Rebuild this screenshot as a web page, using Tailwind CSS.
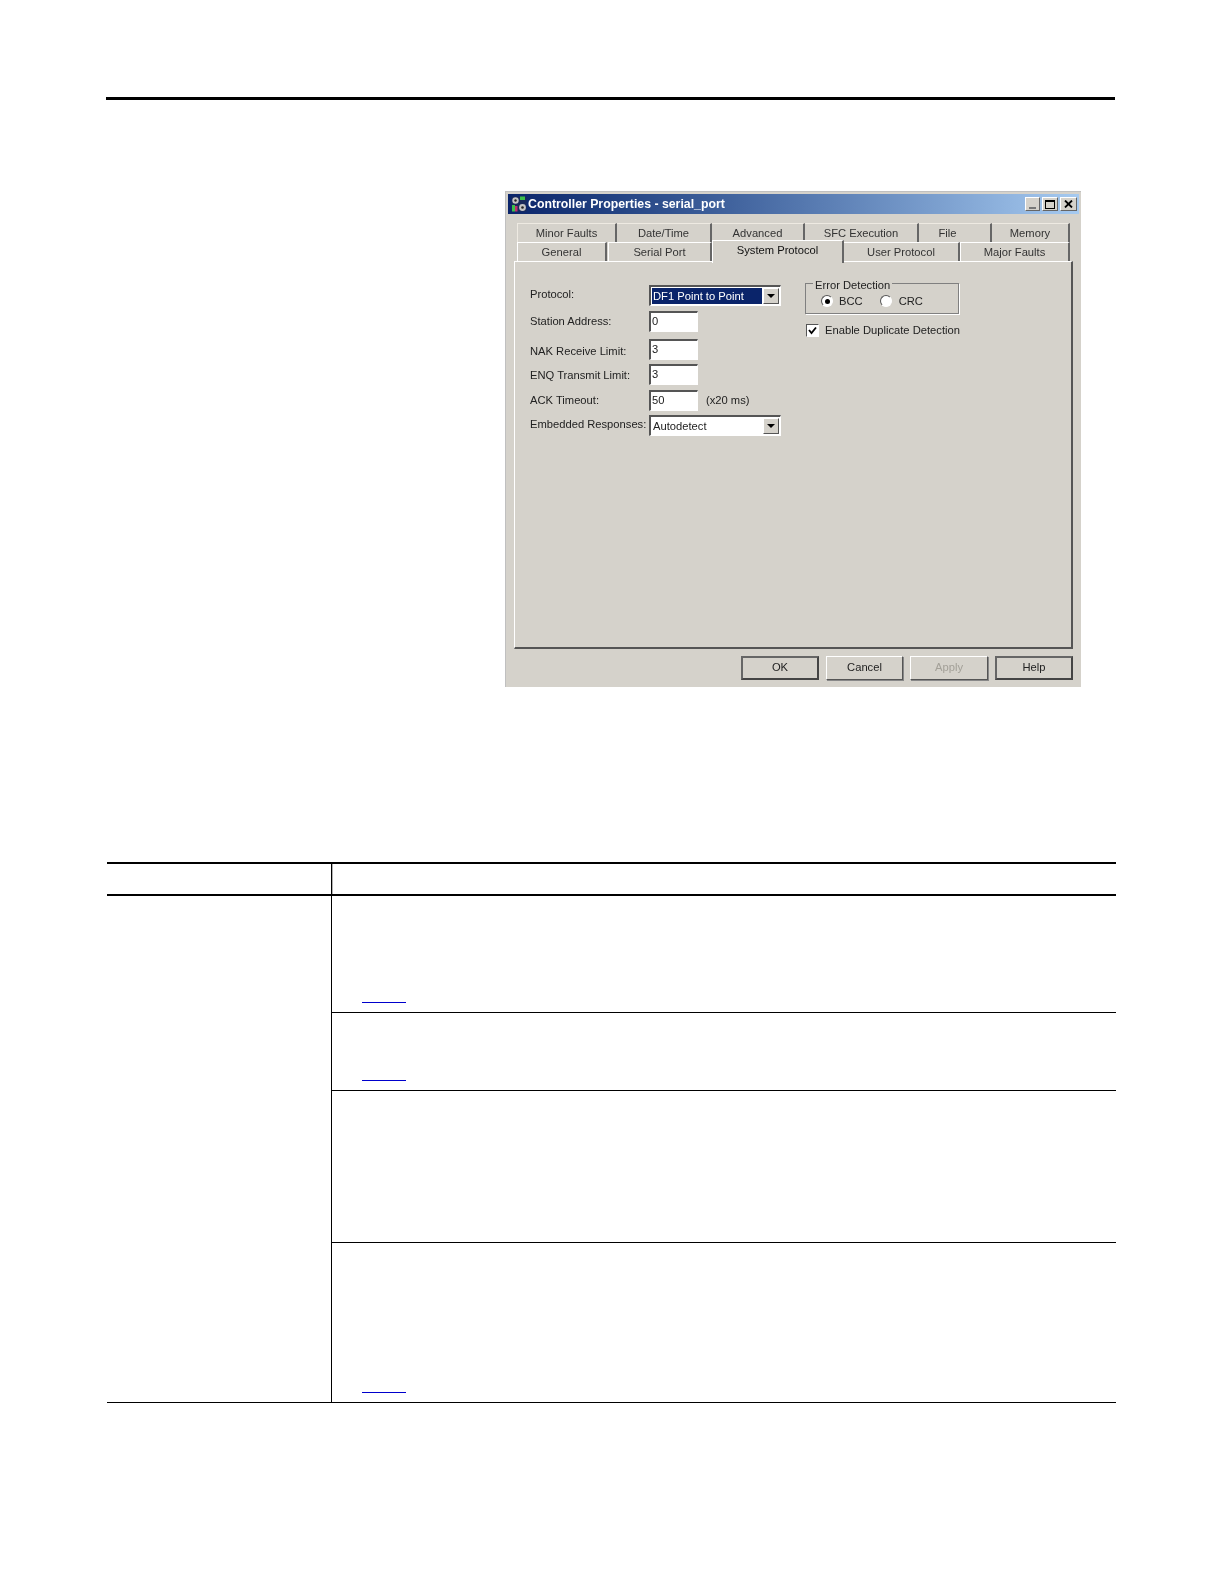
<!DOCTYPE html>
<html>
<head>
<meta charset="utf-8">
<script src="https://cdn.jsdelivr.net/npm/@tailwindcss/browser@4"></script>
</head>
<body class="bg-white">
<div class="w-[1224px] h-[1584px] pt-[97px] pl-[106px] font-['Liberation_Sans',sans-serif]">
  <div class="w-[1009px] h-[3px] bg-black"></div>

  <!-- Dialog -->
  <div class="ml-[399px] mt-[91px] w-[576px] h-[496px] bg-[#d5d2cb] flex flex-col pt-[2px] pl-[1px] pr-[1px] text-[11.2px] leading-[14px] text-[#222] blur-[0.35px] border-t border-l border-[#c0c0c0]">
    <div class="h-[20px] mx-[1px] shrink-0 flex items-center bg-gradient-to-r from-[#0a246a] to-[#a6caf0] pl-[3px] pr-[2px]">
      <svg class="w-[16px] h-[16px] shrink-0" viewBox="0 0 16 16">
        <rect x="0.5" y="0.5" width="15" height="15" fill="#1a2a5a"/>
        <circle cx="4.5" cy="4.5" r="3.2" fill="#c4c4c4"/>
        <circle cx="4.5" cy="4.5" r="1.2" fill="#222"/>
        <rect x="9" y="0.5" width="5" height="3.5" fill="#3cc04a"/>
        <circle cx="11.5" cy="11.5" r="3.4" fill="#c4c4c4"/>
        <circle cx="11.5" cy="11.5" r="1.3" fill="#222"/>
        <rect x="1" y="9" width="3" height="6.5" fill="#3cc04a"/>
        <rect x="4" y="10" width="2.5" height="5.5" fill="#c03070"/>
      </svg>
      <span class="ml-[1px] text-white font-bold text-[12.3px] whitespace-nowrap">Controller Properties - serial_port</span>
      <div class="ml-auto flex gap-[2px] items-center">
        <div class="w-[15px] h-[14px] bg-[#d5d2cb] border border-t-white border-l-white border-r-[#666] border-b-[#666] flex items-end justify-center pb-[1px]"><div class="w-[7px] h-[2px] bg-[#777]"></div></div>
        <div class="w-[16px] h-[14px] bg-[#d5d2cb] border border-t-white border-l-white border-r-[#666] border-b-[#666] flex items-center justify-center"><div class="w-[10px] h-[9px] border border-black border-t-2"></div></div>
        <div class="w-[17px] h-[14px] bg-[#d5d2cb] border border-t-white border-l-white border-r-[#666] border-b-[#666] flex items-center justify-center">
          <svg class="w-[9px] h-[8px]" viewBox="0 0 9 8"><path d="M1 0.5 L8 7.5 M8 0.5 L1 7.5" stroke="#000" stroke-width="1.8"/></svg>
        </div>
      </div>
    </div>

    <!-- Tabs row 1 -->
    <div class="mt-[9px] ml-[10px] h-[19px] shrink-0 flex text-[#333]">
      <div class="w-[100px] border-t border-l border-[#eeeae2] border-r-2 border-r-[#666] flex items-center justify-center pb-[1px]">Minor Faults</div>
      <div class="w-[95px] border-t border-[#eeeae2] border-r-2 border-r-[#666] flex items-center justify-center pb-[1px]">Date/Time</div>
      <div class="w-[93px] border-t border-[#eeeae2] border-r-2 border-r-[#666] flex items-center justify-center pb-[1px]">Advanced</div>
      <div class="w-[114px] border-t border-[#eeeae2] border-r-2 border-r-[#666] flex items-center justify-center pb-[1px]">SFC Execution</div>
      <div class="w-[73px] border-t border-[#eeeae2] border-r-2 border-r-[#666] flex items-center justify-center pb-[1px] pr-[14px]">File</div>
      <div class="w-[78px] border-t border-[#eeeae2] border-r-2 border-r-[#666] flex items-center justify-center pb-[1px]">Memory</div>
    </div>
    <!-- Tabs row 2 -->
    <div class="ml-[10px] h-[19px] shrink-0 flex relative z-10 items-start text-[#333]">
      <div class="w-[90px] h-[19px] border-t border-l border-white border-r-2 border-r-[#666] flex items-center justify-center">General</div>
      <div class="w-[104px] h-[19px] border-t border-l border-white border-r-2 border-r-[#666] flex items-center justify-center ml-[1px]">Serial Port</div>
      <div class="w-[132px] h-[23px] -mt-[2px] bg-[#d5d2cb] border-t border-l border-white border-r-2 border-r-[#666] flex items-start justify-center pt-[2px] text-[#111]">System Protocol</div>
      <div class="w-[116px] h-[19px] border-t border-white border-r-2 border-r-[#666] flex items-center justify-center">User Protocol</div>
      <div class="w-[110px] h-[19px] border-t border-l border-white border-r-2 border-r-[#666] flex items-center justify-center">Major Faults</div>
    </div>

    <!-- Panel -->
    <div class="ml-[7px] w-[559px] h-[388px] shrink-0 border-t border-l border-white border-r-2 border-b-2 border-r-[#555] border-b-[#555] flex pl-[15px] pt-[23px]">
      <div class="w-[275px] shrink-0 flex flex-col">
        <div class="flex items-center h-[21px]">
          <span class="w-[119px] shrink-0 pb-[4px]">Protocol:</span>
          <div class="w-[132px] h-[21px] border-t-2 border-l-2 border-[#555] border-b border-r border-b-white border-r-white bg-white flex items-stretch p-[1px]">
            <div class="flex-1 bg-[#0a246a] text-white flex items-center pl-[1px] whitespace-nowrap">DF1 Point to Point</div>
            <div class="w-[16px] ml-[1px] bg-[#d5d2cb] border border-t-white border-l-white border-r-[#555] border-b-[#555] flex items-center justify-center">
              <svg class="w-[8px] h-[4px]" viewBox="0 0 8 4"><path d="M0 0 H8 L4 4 Z" fill="#000"/></svg>
            </div>
          </div>
        </div>
        <div class="flex items-center h-[21px] mt-[5px]">
          <span class="w-[119px] shrink-0 pb-[2px]">Station Address:</span>
          <div class="w-[49px] h-[21px] border-t-2 border-l-2 border-[#555] border-b border-r border-b-white border-r-white bg-white pl-[1px] pb-[2px] flex items-center">0</div>
        </div>
        <div class="flex items-center h-[21px] mt-[7px]">
          <span class="w-[119px] shrink-0 pt-[2px]">NAK Receive Limit:</span>
          <div class="w-[49px] h-[21px] border-t-2 border-l-2 border-[#555] border-b border-r border-b-white border-r-white bg-white pl-[1px] pb-[2px] flex items-center">3</div>
        </div>
        <div class="flex items-center h-[21px] mt-[4px]">
          <span class="w-[119px] shrink-0">ENQ Transmit Limit:</span>
          <div class="w-[49px] h-[21px] border-t-2 border-l-2 border-[#555] border-b border-r border-b-white border-r-white bg-white pl-[1px] pb-[2px] flex items-center">3</div>
        </div>
        <div class="flex items-center h-[21px] mt-[5px]">
          <span class="w-[119px] shrink-0 pb-[2px]">ACK Timeout:</span>
          <div class="w-[49px] h-[21px] border-t-2 border-l-2 border-[#555] border-b border-r border-b-white border-r-white bg-white pl-[1px] pb-[2px] flex items-center">50</div>
          <span class="ml-[8px] pb-[2px]">(x20 ms)</span>
        </div>
        <div class="flex items-center h-[21px] mt-[4px]">
          <span class="w-[119px] shrink-0 whitespace-nowrap pb-[4px]">Embedded Responses:</span>
          <div class="w-[132px] h-[21px] border-t-2 border-l-2 border-[#555] border-b border-r border-b-white border-r-white bg-white flex items-stretch p-[1px]">
            <div class="flex-1 flex items-center pl-[1px]">Autodetect</div>
            <div class="w-[16px] ml-[1px] bg-[#d5d2cb] border border-t-white border-l-white border-r-[#555] border-b-[#555] flex items-center justify-center">
              <svg class="w-[8px] h-[4px]" viewBox="0 0 8 4"><path d="M0 0 H8 L4 4 Z" fill="#000"/></svg>
            </div>
          </div>
        </div>
      </div>

      <div class="flex flex-col -mt-[2px]">
        <div class="relative w-[154px] h-[31px] border border-[#808080] shadow-[1px_1px_0_#fff] flex items-center pl-[15px] pt-[5px]">
          <span class="absolute left-[7px] -top-[6px] bg-[#d5d2cb] px-[2px]">Error Detection</span>
          <span class="w-[12px] h-[12px] rounded-full bg-white border border-t-[#555] border-l-[#555] border-r-white border-b-white flex items-center justify-center shrink-0"><span class="w-[5px] h-[5px] rounded-full bg-black"></span></span>
          <span class="ml-[6px]">BCC</span>
          <span class="ml-[17px] w-[12px] h-[12px] rounded-full bg-white border border-t-[#555] border-l-[#555] border-r-white border-b-white shrink-0"></span>
          <span class="ml-[7px]">CRC</span>
        </div>
        <div class="flex items-center mt-[9px] ml-[1px]">
          <span class="w-[13px] h-[13px] bg-white border-t border-l border-[#555] border-b border-r border-b-white border-r-white flex items-center justify-center shrink-0">
            <svg class="w-[9px] h-[9px]" viewBox="0 0 9 9"><path d="M1 4 L3.5 7 L8 1.5" fill="none" stroke="#000" stroke-width="1.8"/></svg>
          </span>
          <span class="ml-[6px] whitespace-nowrap">Enable Duplicate Detection</span>
        </div>
      </div>
    </div>

    <!-- Footer buttons -->
    <div class="mt-[7px] flex justify-end gap-[7px] pr-[7px]">
      <div class="w-[78px] h-[24px] border-2 border-[#444] border-t-[#666] border-l-[#666] flex items-center justify-center pb-[3px]">OK</div>
      <div class="w-[77px] h-[24px] border border-t-white border-l-white border-r-[#555] border-b-[#555] shadow-[1px_1px_0_#888] flex items-center justify-center pb-[3px]">Cancel</div>
      <div class="w-[78px] h-[24px] border border-t-white border-l-white border-r-[#555] border-b-[#555] shadow-[1px_1px_0_#888] flex items-center justify-center pb-[3px] text-[#a3a098]">Apply</div>
      <div class="w-[78px] h-[24px] border-2 border-[#444] border-t-[#666] border-l-[#666] flex items-center justify-center pb-[3px]">Help</div>
    </div>
  </div>

  <!-- Table -->
  <div class="ml-[1px] mt-[175px] w-[1009px]">
    <div class="border-t-2 border-b-2 border-black h-[34px] flex">
      <div class="w-[224px]"></div>
      <div class="flex-1 border-l border-black shadow-[inset_1px_0_0_rgba(0,0,0,0.3)]"></div>
    </div>
    <div class="flex border-b border-black">
      <div class="w-[224px]"></div>
      <div class="flex-1 border-l border-black flex flex-col">
        <div class="h-[117px] border-b border-black flex flex-col justify-end pb-[9px] pl-[30px]"><div class="w-[44px] h-[1px] bg-[#0000cc]"></div></div>
        <div class="h-[78px] border-b border-black flex flex-col justify-end pb-[9px] pl-[30px]"><div class="w-[44px] h-[1px] bg-[#0000cc]"></div></div>
        <div class="h-[152px] border-b border-black"></div>
        <div class="h-[159px] flex flex-col justify-end pb-[9px] pl-[30px]"><div class="w-[44px] h-[1px] bg-[#0000cc]"></div></div>
      </div>
    </div>
  </div>
</div>
</body>
</html>
